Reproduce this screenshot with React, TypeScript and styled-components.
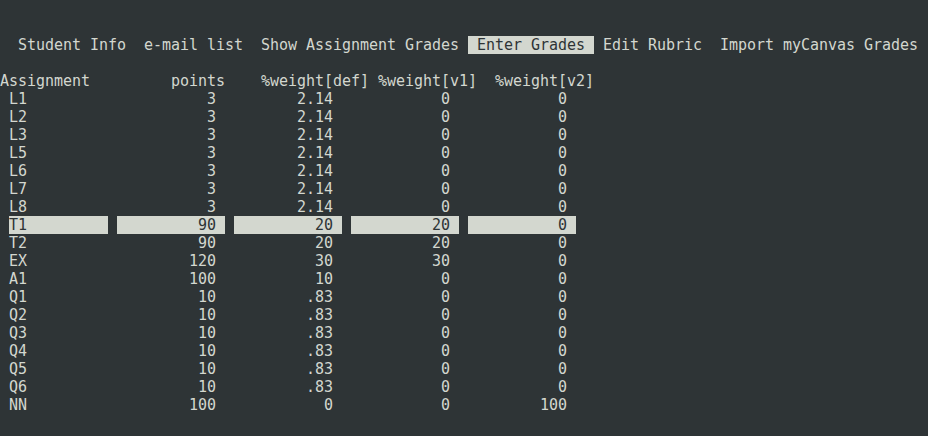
import React from "react";
import styled, { createGlobalStyle } from "styled-components";

const Global = createGlobalStyle`
  html, body { margin: 0; padding: 0; background: #2e3436; }
  body { overflow: hidden; }
`;

const FG = "#d3d7cf";
const BG = "#2e3436";

const Screen = styled.div`
  width: 928px;
  height: 436px;
  background: ${BG};
  color: ${FG};
  font-family: "DejaVu Sans Mono", "Liberation Mono", monospace;
  font-size: 15px;
  line-height: 18px;
  letter-spacing: -0.03px;
  padding-top: 36px;
  box-sizing: border-box;
  overflow: hidden;
`;

const MenuBar = styled.nav`
  display: flex;
  height: 18px;
  padding-left: 9px;
  margin-bottom: 18px;
  white-space: pre;
`;

const MenuItem = styled.span<{ $active?: boolean }>`
  padding: 0 9px;
  height: 18px;
  background: ${(p) => (p.$active ? FG : "transparent")};
  color: ${(p) => (p.$active ? BG : FG)};
`;

const HeaderLine = styled.div`
  height: 18px;
  white-space: pre;
`;

const Row = styled.div`
  display: grid;
  grid-template-columns: 99px 108px 108px 108px 108px;
  column-gap: 9px;
  padding-left: 9px;
  height: 18px;
`;

const Cell = styled.div<{ $selected?: boolean; $right?: boolean }>`
  height: 18px;
  white-space: pre;
  text-align: ${(p) => (p.$right ? "right" : "left")};
  padding-right: ${(p) => (p.$right ? "9px" : "0")};
  background: ${(p) => (p.$selected ? FG : "transparent")};
  color: ${(p) => (p.$selected ? BG : FG)};
`;

type Rec = [string, string, string, string, string];

const rows: Rec[] = [
  ["L1", "3", "2.14", "0", "0"],
  ["L2", "3", "2.14", "0", "0"],
  ["L3", "3", "2.14", "0", "0"],
  ["L5", "3", "2.14", "0", "0"],
  ["L6", "3", "2.14", "0", "0"],
  ["L7", "3", "2.14", "0", "0"],
  ["L8", "3", "2.14", "0", "0"],
  ["T1", "90", "20", "20", "0"],
  ["T2", "90", "20", "20", "0"],
  ["EX", "120", "30", "30", "0"],
  ["A1", "100", "10", "0", "0"],
  ["Q1", "10", ".83", "0", "0"],
  ["Q2", "10", ".83", "0", "0"],
  ["Q3", "10", ".83", "0", "0"],
  ["Q4", "10", ".83", "0", "0"],
  ["Q5", "10", ".83", "0", "0"],
  ["Q6", "10", ".83", "0", "0"],
  ["NN", "100", "0", "0", "100"],
];

const menu = [
  "Student Info",
  "e-mail list",
  "Show Assignment Grades",
  "Enter Grades",
  "Edit Rubric",
  "Import myCanvas Grades",
];

export default function App() {
  return (
    <>
      <Global />
      <Screen>
        <MenuBar>
          {menu.map((m) => (
            <MenuItem key={m} $active={m === "Enter Grades"}>
              {m}
            </MenuItem>
          ))}
        </MenuBar>
        <HeaderLine>
          {"Assignment         points    %weight[def] %weight[v1]  %weight[v2]"}
        </HeaderLine>
        {rows.map((r) => {
          const sel = r[0] === "T1";
          return (
            <Row key={r[0]}>
              <Cell $selected={sel}>{r[0]}</Cell>
              {r.slice(1).map((v, i) => (
                <Cell key={i} $right $selected={sel}>
                  {v}
                </Cell>
              ))}
            </Row>
          );
        })}
      </Screen>
    </>
  );
}
